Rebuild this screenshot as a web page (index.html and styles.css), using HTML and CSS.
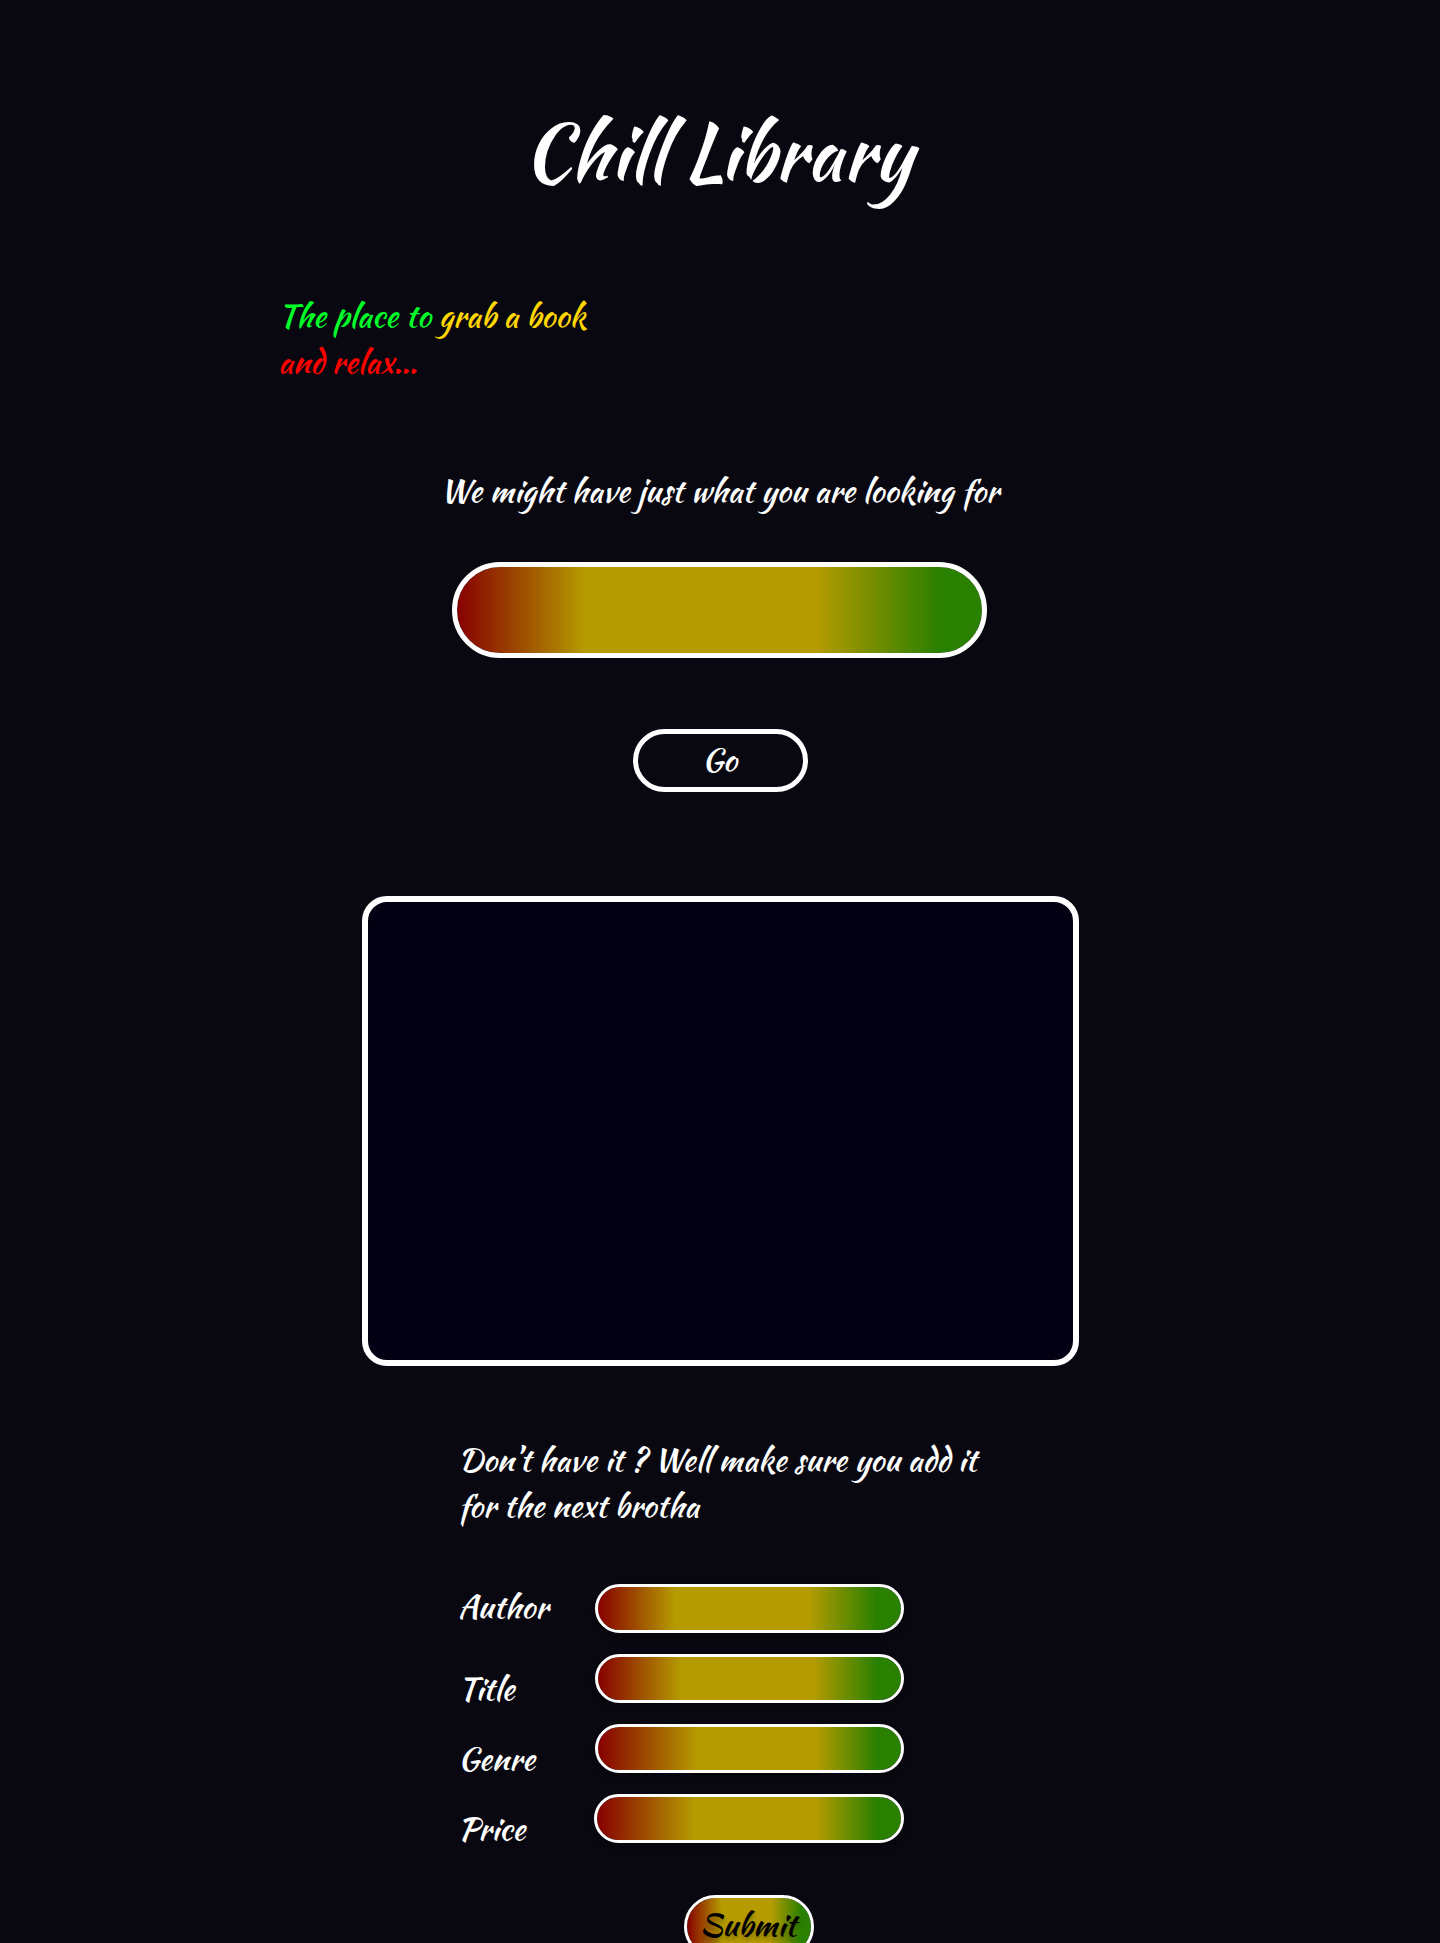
FILE: index.html
```html
<!DOCTYPE html>
<html lang="en">
<head>
<meta charset="utf-8">
<title>Chill Library</title>
<link rel="stylesheet" href="styles.css">
</head>
<body>
<main class="page">
  <h1 class="title">Chill Library</h1>
  <p class="tagline"><span class="green">The place to</span> <span class="gold">grab a book</span><br><span class="red">and relax...</span></p>
  <p class="lead">We might have just what you are looking for</p>
  <div class="search"></div>
  <button class="go" type="button">Go</button>
  <section class="results"></section>
  <p class="prompt">Don’t have it ? Well make sure you add it<br>for the next brotha</p>
  <form class="form">
    <div class="row author"><span class="label">Author</span><div class="field"></div></div>
    <div class="row name"><span class="label">Title</span><div class="field"></div></div>
    <div class="row genre"><span class="label">Genre</span><div class="field"></div></div>
    <div class="row price"><span class="label">Price</span><div class="field"></div></div>
  </form>
  <button class="submit" type="button">Submit</button>
</main>
</body>
</html>
```
FILE: styles.css
```css
* { box-sizing: border-box; }
html, body { margin: 0; height: 1943px; overflow: hidden; background: #090810; }
.page {
  display: flex;
  flex-direction: column;
  align-items: flex-start;
  width: 1440px;
  height: 1943px;
  overflow: hidden;
  padding-top: 94px;
  color: #fff;
  font: 400 32px/46px "Kaushan Script", "Lato", cursive;
}
.page > * { flex-shrink: 0; }
h1, p { margin: 0; font-weight: 400; white-space: nowrap; }
button { padding: 0; color: inherit; font: inherit; }
.title { margin-left: 523px; font-size: 78px; line-height: 116px; }
.tagline { margin: 83px 0 0 278px; }
.green { color: #00ff29; }
.gold { color: #ffd600; }
.red { color: #f00; }
.lead { margin: 83px 0 0 440px; }
.search, .field, .submit {
  background: linear-gradient(90deg, #870000 0%, #b59b00 var(--from), #b59b00 var(--to), #2a8000 92%) padding-box;
}
.search {
  --from: 24.5%;
  --to: 68.5%;
  width: 535px;
  height: 96px;
  margin: 48px 0 0 452px;
  border: 5px solid #fff;
  border-radius: 50px;
}
.go {
  width: 175px;
  height: 63px;
  margin: 71px 0 0 633px;
  padding: 0 2px 2px 0;
  border: 5px solid #fff;
  border-radius: 32px;
  background: none;
}
.results {
  width: 717px;
  height: 470px;
  margin: 104px 0 0 362px;
  border: 6px solid #fff;
  border-radius: 25px;
  background: #020012;
}
.prompt { margin: 71px 0 0 458px; }
.form { display: grid; gap: 21px; margin: 55px 0 0 458px; }
.row { display: grid; grid-template-columns: 137px 309px; height: 49px; }
.label { padding-top: 12px; }
.field {
  height: 49px;
  border: 3px solid #fff;
  border-radius: 25px;
  box-shadow: 0 4px 4px rgba(0, 0, 0, .25);
}
.author { --from: 25.5%; --to: 69.5%; }
.author .label { padding-top: 0; }
.name { --from: 27.5%; --to: 71%; }
.genre { --from: 33%; --to: 72%; }
.price { --from: 32%; --to: 72%; }
.price .field { width: 310px; margin-left: -1px; }
.submit {
  --from: 28%;
  --to: 68%;
  width: 130px;
  height: 63px;
  margin: 52px 0 0 684px;
  padding: 0 2px 4px 0;
  border: 3px solid #fff;
  border-radius: 32px;
  color: #000;
  text-shadow: 0 4px 4px rgba(0, 0, 0, .25);
}
```
